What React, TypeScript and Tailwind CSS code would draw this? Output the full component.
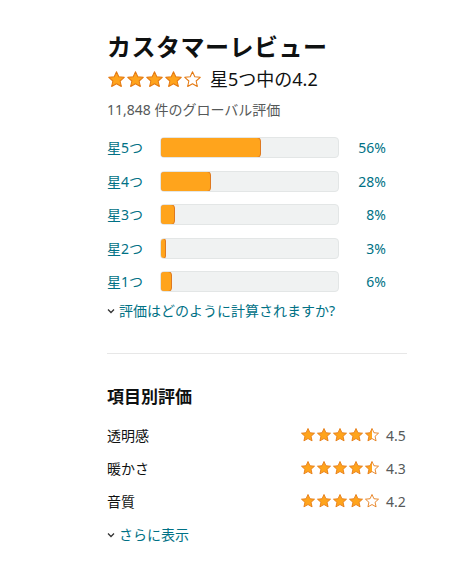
import {useId} from "react";

const font = "font-['Noto_Sans','Noto_Sans_CJK_JP',sans-serif]";

const histogram = [
    {label: "星5つ", pct: 56},
    {label: "星4つ", pct: 28},
    {label: "星3つ", pct: 8},
    {label: "星2つ", pct: 3},
    {label: "星1つ", pct: 6},
];

const features = [
    {name: "透明感", stars: 4.5, value: "4.5"},
    {name: "暖かさ", stars: 4.5, value: "4.3"},
    {name: "音質", stars: 4, value: "4.2"},
];

const starPoints = "12,2.2 14.9,8.6 21.8,9.3 16.6,13.9 18.1,20.8 12,17.3 5.9,20.8 7.4,13.9 2.2,9.3 9.1,8.6";

function Star({fill, size}: {fill: number; size: number}) {
    const id = useId();
    return <svg width={size} height={size} viewBox="0 0 24 24">
        <defs>
            <linearGradient id={id} x1="0" x2="1" y1="0" y2="0">
                <stop offset={fill} stopColor="#ffa41c"/>
                <stop offset={fill} stopColor="#ffffff"/>
            </linearGradient>
        </defs>
        <polygon points={starPoints} fill={`url(#${id})`} stroke="#e47911" strokeWidth="1.3"
                 strokeLinejoin="round"/>
    </svg>
}

function Stars({rating, size}: {rating: number; size: number}) {
    return <div className="flex">
        {[0, 1, 2, 3, 4].map(i => {
            const f = Math.max(0, Math.min(1, rating - i));
            return <Star key={i} fill={f} size={size}/>
        })}
    </div>
}

function Chevron() {
    return <svg width="8" height="6" viewBox="0 0 8 6" className="mr-[4px]">
        <path d="M1 1.5 L4 4.5 L7 1.5" fill="none" stroke="#333" strokeWidth="1.3"/>
    </svg>
}

export default function App() {
    return <div className={`${font} bg-white w-[460px] h-[579px] text-[#0f1111]`}>
        <div className="pl-[107px] w-[407px] pt-[29px]">
            <h2 className="text-[24px] font-bold leading-[36px] tracking-[0.5px]">カスタマーレビュー</h2>

            <div className="flex items-center mt-[1px] h-[26px]">
                <Stars rating={4} size={19}/>
                <span className="ml-[8px] text-[18px] leading-[24px]">星5つ中の4.2</span>
            </div>

            <p className="text-[14px] text-[#565959] mt-[8px] leading-[20px]">11,848 件のグローバル評価</p>

            <div className="mt-[17px] flex flex-col gap-[12.5px]">
                {histogram.map(row => (
                    <div key={row.label} className="flex items-center h-[21px]">
                        <span className="w-[53px] text-[14px] text-[#007185]">{row.label}</span>
                        <div className="w-[179px] h-[21px] rounded-[4px] bg-[#f0f2f2] border border-[#e3e6e6] overflow-hidden">
                            <div className="h-full bg-[#ffa41c] border border-[#de7921] rounded-[4px] -m-px box-content"
                                 style={{width: `${row.pct * 1.79 - 1}px`}}/>
                        </div>
                        <span className="w-[47px] text-right text-[14px] text-[#007185]">{row.pct}%</span>
                    </div>
                ))}
            </div>

            <div className="flex items-center mt-[9px] text-[14px] text-[#007185] leading-[20px]">
                <Chevron/>
                <span>評価はどのように計算されますか?</span>
            </div>

            <div className="mt-[32px] border-t border-[#e7e7e7]"/>

            <h3 className="mt-[30px] text-[17px] font-bold leading-[26px]">項目別評価</h3>

            <div className="mt-[15px] flex flex-col gap-[13px]">
                {features.map(f => (
                    <div key={f.name} className="flex items-center justify-between h-[20px]">
                        <span className="text-[14px]">{f.name}</span>
                        <div className="flex items-center">
                            <Stars rating={f.stars} size={16}/>
                            <span className="ml-[6px] text-[14px] text-[#565959] w-[21px]">{f.value}</span>
                        </div>
                    </div>
                ))}
            </div>

            <div className="flex items-center mt-[14px] text-[14px] text-[#007185] leading-[20px]">
                <Chevron/>
                <span>さらに表示</span>
            </div>
        </div>
    </div>
}
